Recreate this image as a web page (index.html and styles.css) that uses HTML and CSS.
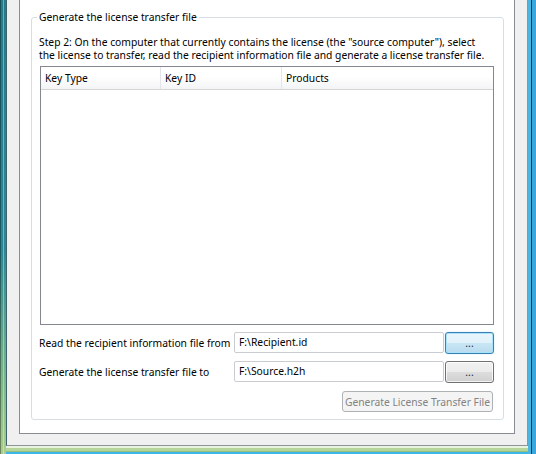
FILE: index.html
```html
<!DOCTYPE html>
<html>
<head>
<meta charset="utf-8">
<link rel="stylesheet" href="styles.css">
</head>
<body>
<div class="frame">
  <div class="client">
    <div class="panel">
      <fieldset class="group">
        <legend class="group-title">Generate the license transfer file</legend>
        <p class="step">Step 2: On the computer that currently contains the license (the "source computer"), select<br>the license to transfer, read the recipient information file and generate a license transfer file.</p>
        <div class="listview">
          <div class="lv-header">
            <div class="col c1">Key Type</div>
            <div class="col c2">Key ID</div>
            <div class="col c3">Products</div>
          </div>
          <div class="lv-body"></div>
        </div>
        <div class="row">
          <span class="label">Read the recipient information file from</span>
          <div class="textbox">F:\Recipient.id</div>
          <button class="btn btn-default" type="button">...</button>
        </div>
        <div class="row">
          <span class="label">Generate the license transfer file to</span>
          <div class="textbox">F:\Source.h2h</div>
          <button class="btn" type="button">...</button>
        </div>
        <div class="actions">
          <button class="btn btn-disabled gen" type="button" disabled>Generate License Transfer File</button>
        </div>
      </fieldset>
    </div>
  </div>
</div>
</body>
</html>
```
FILE: styles.css
```css
html, body {
  margin: 0;
  padding: 0;
  background: #2a8493;
}

.frame {
  width: 536px;
  height: 454px;
  box-sizing: border-box;
  padding: 0 8px 8px 6px;
  display: flex;
  flex-direction: column;
  font-family: "Noto Sans", "Open Sans", sans-serif;
  font-size: 10.3px;
  color: #000;
  background:
    linear-gradient(to right, rgba(0,0,0,0.35) 0 1px, transparent 1px 3px, rgba(255,255,255,0.35) 3px 4px, transparent 4px) left top / 6px 100% no-repeat,
    linear-gradient(to bottom, #257c8b 0%, #2b8896 55%, #7fb88a 85%, #a9cd8f 100%) left top / 6px 100% no-repeat,
    linear-gradient(to right, #4cb6e2 0 3px, #173c56 3px 4px, #3aa8dc 4px 8px) right top / 8px 100% no-repeat,
    linear-gradient(to bottom, #e9f3df 0 2px, #b5d59a 2px 5px, #8fbf7a 5px 6px, #3fb6e6 6px 8px) left bottom / 100% 8px no-repeat,
    #2a8493;
}

.client {
  flex: 1;
  display: flex;
  flex-direction: column;
  background: #f0f0f0;
  border: 1px solid #8d9599;
  border-top: none;
  border-left-color: #3f636c;
  padding: 0 12px 11px 12px;
}

.panel {
  flex: 1;
  display: flex;
  flex-direction: column;
  background: #ffffff;
  border: 1px solid #898c95;
  border-top: none;
  padding: 0 10px 0 11px;
}

.group {
  margin: 11px 0 0 0;
  padding: 12px 9px 7px 7px;
  border: 1px solid #d5dfe5;
  border-radius: 3px;
  min-width: 0;
}

.group-title {
  padding: 0 2px;
  margin-left: -2px;
  line-height: 13px;
}

.step {
  margin: 0 0 4px 0;
  line-height: 13px;
  white-space: nowrap;
}

.listview {
  margin-left: 1px;
  height: 259px;
  box-sizing: border-box;
  border: 1px solid #828790;
  display: flex;
  flex-direction: column;
  background: #fff;
}

.lv-header {
  display: flex;
  height: 23px;
  box-sizing: border-box;
  border-bottom: 1px solid #d5d5d5;
  background: linear-gradient(#ffffff 0%, #ffffff 45%, #f3f4f6 100%);
}

.col {
  box-sizing: border-box;
  padding-left: 4px;
  line-height: 22px;
  white-space: nowrap;
}

.c1 { width: 120px; border-right: 1px solid #e2e5e9; }
.c2 { width: 121px; border-right: 1px solid #e2e5e9; }
.c3 { flex: 1; }

.lv-body { flex: 1; }

.row {
  display: grid;
  grid-template-columns: 195px 210px 1fr;
  align-items: start;
  height: 22px;
  margin-top: 7px;
}

.label {
  line-height: 22px;
  white-space: nowrap;
}

.textbox {
  height: 21px;
  box-sizing: border-box;
  border: 1px solid #c9cdd2;
  border-radius: 2px;
  padding-left: 4px;
  line-height: 19px;
  white-space: nowrap;
}

.btn {
  font-family: inherit;
  font-size: inherit;
  color: #000;
  box-sizing: border-box;
  margin: 0;
  padding: 0;
  border: 1px solid #707070;
  border-radius: 3px;
  background: linear-gradient(#f2f2f2 0%, #ebebeb 48%, #dddddd 52%, #cfcfcf 100%);
  box-shadow: inset 0 0 0 1px rgba(255,255,255,0.75);
  line-height: 18px;
}

.row .btn {
  justify-self: end;
  width: 49px;
  height: 22px;
  color: #1b2a4a;
}

.btn-default {
  border-color: #3c7fb1;
  background: linear-gradient(#eaf6fd 0%, #e1f1fa 48%, #c9e6f5 52%, #b8dbee 100%);
  box-shadow: inset 0 0 0 1px #a8e3fb, 0 0 1px #6cc7f0;
}

.actions {
  display: flex;
  justify-content: flex-end;
  margin-top: 8px;
}

.gen {
  width: 151px;
  height: 21px;
  margin-right: 1px;
  white-space: nowrap;
}

.btn-disabled {
  border-color: #adb2b5;
  background: #f4f4f4;
  box-shadow: none;
  color: #838383;
}
```
